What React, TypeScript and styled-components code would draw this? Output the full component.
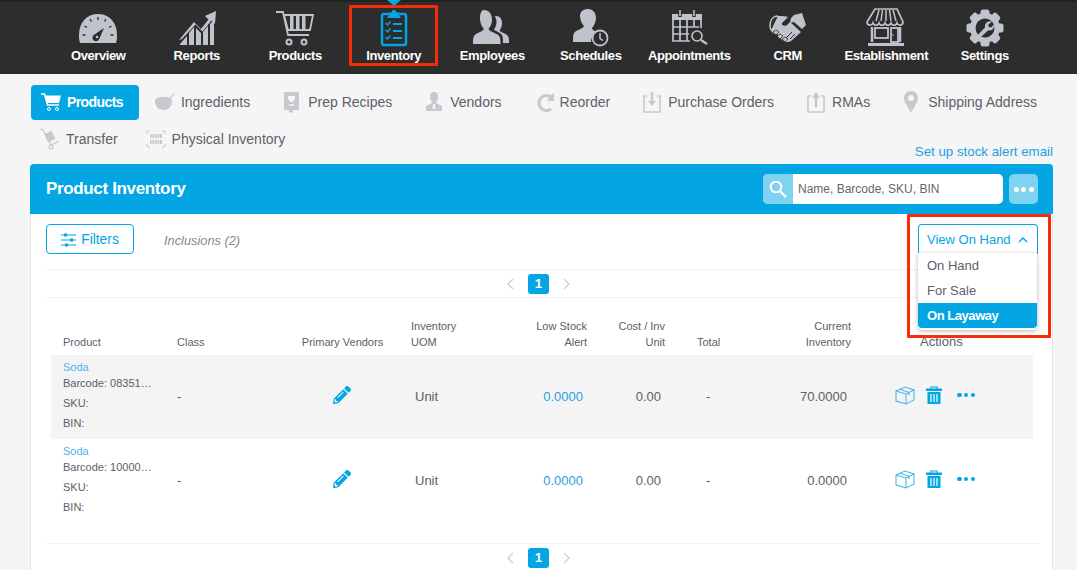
import React from "react";
import styled, { createGlobalStyle } from "styled-components";
import { FaPencilAlt } from "react-icons/fa";

const BLUE = "#03a5e3";
const GREY = "#bfc3cb";
const TAB = "#c6c9cf";

const Global = createGlobalStyle`
  html, body { margin: 0; padding: 0; height: 570px; overflow: hidden; background: #f5f5f5; }
  body { font-family: "Liberation Sans", Arial, sans-serif; color: #555; }
`;

const Page = styled.div`width: 1077px; height: 570px; overflow: hidden;`;
const Nav = styled.nav`
  height: 74px; box-sizing: border-box; background: #2d2d2d; border-top: 2px solid #222;
  display: flex; padding-left: 49px;
`;
const NavItem = styled.div`
  position: relative; width: 98.5px; display: flex; flex-direction: column; align-items: center;
  padding-top: 5px; box-sizing: border-box;
`;
const NavIcon = styled.svg`width: 40px; height: 40px; display: block;`;
const NavLabel = styled.span`
  margin-top: 1px; color: #fff; font-size: 13px; line-height: 16px; font-weight: 700; letter-spacing: -0.4px; white-space: nowrap;
`;
const Pointer = styled.div`
  position: absolute; top: -2px; left: 50%; margin-left: -7px; width: 0; height: 0;
  border-left: 7px solid transparent; border-right: 7px solid transparent; border-top: 6px solid ${BLUE};
`;
const NavHighlight = styled.div`
  position: absolute; left: 4.5px; top: 3px; width: 89px; height: 61px; box-sizing: border-box;
  border: 3px solid #f52d07; border-radius: 1px;
`;

const SubNav = styled.div`
  display: flex; flex-wrap: wrap; column-gap: 8px; row-gap: 2px; padding: 11px 18px 4px 31px;
  width: 1077px; box-sizing: border-box;
`;
const Tab = styled.div<{ $active?: boolean; $pull?: number }>`
  height: 35px; display: flex; align-items: center; gap: 7px; box-sizing: border-box;
  padding: ${p => (p.$active ? "0 16px 2px 10px" : "0 16px 2px 8px")};
  margin-left: ${p => p.$pull ?? 0}px;
  border-radius: 4px; font-size: 14px;
  font-weight: ${p => (p.$active ? 700 : 400)};
  letter-spacing: ${p => (p.$active ? "-0.6px" : "0")};
  background: ${p => (p.$active ? BLUE : "transparent")};
  color: ${p => (p.$active ? "#fff" : "#5d6068")};
  align-self: flex-start;
`;
const TabIcon = styled.svg`width: 20px; height: 24px; flex: none; display: block; margin-right: -1px;`;
const AlertLink = styled.a`
  margin-left: auto; margin-right: 6px; align-self: flex-end; font-size: 13.3px; line-height: 16px; color: #1d9fe3; margin-top: 22px;
`;

const Card = styled.section`
  margin-left: 30px; width: 1023px; background: #fff; border: solid #e6e6e6; border-width: 0 1px; box-sizing: border-box;
`;
const CardHeader = styled.header`
  height: 50px; margin: 0 -1px; background: ${BLUE}; border-radius: 4px 4px 0 0; display: flex; align-items: center;
  padding: 0 15px 0 16px;
`;
const Title = styled.h1`
  margin: 0; flex: 1; color: #fff; font-size: 17px; font-weight: 700; letter-spacing: -0.35px;
`;
const Search = styled.div`
  width: 240px; height: 30px; display: flex; border-radius: 5px; overflow: hidden; background: #fff;
`;
const SearchIcon = styled.div`
  width: 30px; background: #80d2f1; display: flex; align-items: center; justify-content: center;
`;
const SearchText = styled.div`
  padding-left: 5px; font-size: 12px; line-height: 30px; color: #666;
`;
const MoreBtn = styled.div`
  width: 29px; height: 30px; margin-left: 6px; background: #80d2f1; border-radius: 5px;
  display: flex; align-items: center; justify-content: center; gap: 2.5px;
`;
const WhiteDot = styled.i`width: 5px; height: 5px; border-radius: 50%; background: #fff;`;

const Body = styled.div`padding: 0 14px 0 15px;`;
const FilterRow = styled.div`
  height: 56px; display: flex; align-items: flex-start; padding-top: 10px; box-sizing: border-box;
  border-bottom: 1px solid #f0f0f0;
`;
const FilterBtn = styled.div`
  width: 88px; height: 30px; box-sizing: border-box; border: 1px solid ${BLUE}; border-radius: 4px; padding-top: 1px;
  display: flex; align-items: center; justify-content: center; gap: 5px; color: ${BLUE}; font-size: 13.8px;
`;
const Inclusions = styled.em`
  margin-left: 30px; line-height: 33px; font-size: 12.8px; color: #888;
`;
const DropAnchor = styled.div`position: relative; margin-left: auto; width: 120px; height: 30px;`;
const DropBtn = styled.div`
  height: 30px; box-sizing: border-box; border: 1px solid ${BLUE}; border-bottom: none; border-radius: 4px 4px 0 0;
  display: flex; align-items: center; padding-left: 8px; gap: 7px; color: ${BLUE}; font-size: 13px;
`;
const DropMenu = styled.ul`
  position: absolute; z-index: 3; left: 0; top: 29px; width: 119px; margin: 0; padding: 0 0 2px; list-style: none;
  background: #fff; border-radius: 0 0 4px 4px; box-shadow: 0 1px 4px rgba(0,0,0,.3);
`;
const DropItem = styled.li<{ $on?: boolean }>`
  height: 25px; line-height: 25px; padding-left: 9px; font-size: 13px;
  color: ${p => (p.$on ? "#fff" : "#5d6068")}; background: ${p => (p.$on ? BLUE : "#fff")};
  font-weight: ${p => (p.$on ? 700 : 400)}; letter-spacing: ${p => (p.$on ? "-0.45px" : "0")};
  &:last-child { border-radius: 0 0 4px 4px; }
`;
const DropHighlight = styled.div`
  position: absolute; z-index: 4; left: -11px; right: -13px; top: -10px; height: 124px; box-sizing: border-box;
  border: 3px solid #f52d07; border-radius: 1px; pointer-events: none;
`;

const Pager = styled.div<{ $line?: boolean }>`
  height: ${p => (p.$line ? 28 : 27)}px; display: flex; align-items: center; justify-content: center; gap: 14px; box-sizing: border-box;
  border-bottom: ${p => (p.$line ? "1px solid #f0f0f0" : "none")};
  padding-right: 7px;
`;
const PageNum = styled.div`
  width: 21px; height: 20px; background: ${BLUE}; color: #fff; font-size: 13.5px; font-weight: 700;
  border-radius: 3px; text-align: center; line-height: 20px;
`;

const COLS = "114px 125px 105px 64px 132px 78px 71px 115px 178px";
const HeadRow = styled.div`
  display: grid; grid-template-columns: ${COLS}; margin: 0 5px; height: 57px; box-sizing: border-box; padding-bottom: 5px; align-items: end;
`;
const HeadCell = styled.div<{ $align?: string; $pr?: number; $pl?: number; $size?: number }>`
  font-size: ${p => p.$size ?? 11}px; line-height: 16px; color: #5d6068;
  text-align: ${p => p.$align ?? "left"};
  padding-left: ${p => p.$pl ?? 0}px; padding-right: ${p => p.$pr ?? 0}px;
`;
const Row = styled.div<{ $alt?: boolean }>`
  display: grid; grid-template-columns: ${COLS}; margin: 0 5px; height: 84px; align-items: center;
  background: ${p => (p.$alt ? "#f4f4f4" : "#fff")};
`;
const ProductCell = styled.div`
  padding-left: 12px; font-size: 11px; line-height: 20px; color: #5d6068; align-self: start; padding-top: 4px;
`;
const ProductName = styled.div`color: #4ab5ea; line-height: 16px; margin-bottom: -2px;`;
const Clip = styled.div`white-space: nowrap;`;
const Cell = styled.div<{ $align?: string; $pr?: number; $pl?: number; $blue?: boolean }>`
  font-size: 13px; color: ${p => (p.$blue ? "#2a9fe0" : "#5d6068")};
  text-align: ${p => p.$align ?? "left"};
  padding-left: ${p => p.$pl ?? 0}px; padding-right: ${p => p.$pr ?? 0}px;
  position: relative; top: -1px;
`;
const PencilWrap = styled.div`display: flex; justify-content: center; color: ${BLUE}; position: relative; top: -2px; left: -1px;`;
const Actions = styled.div`display: flex; align-items: center; padding-left: 40px; position: relative; top: -2px;`;
const BlueDots = styled.div`display: flex; gap: 2.3px; margin-left: 15px;`;
const BlueDot = styled.i`width: 4.5px; height: 4.5px; border-radius: 50%; background: ${BLUE};`;
const FootLine = styled.div`height: 20px; border-bottom: 1px solid #f0f0f0;`;
const ActSvg = styled.svg`display: block;`;

const ic = { fill: GREY };
const D = "#2d2d2d";
const gearTeeth = [0, 45, 90, 135, 180, 225, 270, 315];

const navIcons: Record<string, React.ReactNode> = {
  Overview: <g>
    <path d="M2 36c-1-3-1-6-1-8C1 15 9 7 20 7s19 8 19 21c0 2 0 5-1 8z" {...ic} />
    <path d="M20 10v3M12 12l1.500 2.500M28 12l-1.500 2.500M6.500 19l2.500 1.500M33.500 19l-2.500 1.500M4.500 28h3M32.500 28h3" stroke={D} strokeWidth="1.300" />
    <path d="M26 21l-9.500 6.500a3.500 3.500 0 1 0 4.700 4.500z" fill={D} />
    <circle cx="19" cy="30" r="1.300" fill={GREY} />
  </g>,
  Reports: <g fill={GREY}>
    <path d="M39 4l-1 13-3.500-3.500-9 11-7-7L5 32l-3 1 15-18 7 7 7.500-9.500L28 9z" />
    <path d="M3 38v-1l7-8v9zM12 38V26l5-6v18zM19 38V21l5 5v12zM26 38V25l5-6v19zM33 38V17l4-4v25z" />
  </g>,
  Products: <g>
    <path d="M1 5h7l5 23h21" fill="none" stroke={GREY} strokeWidth="1.800" />
    <path d="M9 8h29l-3 15H13z" fill="none" stroke={GREY} strokeWidth="1.800" />
    <path d="M15 9v13h3.500V9zM21 9v13h3.500V9zM27 9v13h3.500V9z" fill={GREY} />
    <circle cx="14" cy="35" r="2.500" fill="none" stroke={GREY} strokeWidth="2" />
    <circle cx="29" cy="35" r="2.500" fill="none" stroke={GREY} strokeWidth="2" />
  </g>,
  Inventory: <g>
    <rect x="8" y="7" width="24" height="31" rx="2" fill="none" stroke={BLUE} strokeWidth="2.500" />
    <path d="M15 8V5.500h2.500a2.500 2.500 0 0 1 5 0H25V8l2 3H13z" fill={BLUE} />
    <path d="M11.500 16l2 2 3-3.500M11.500 23l2 2 3-3.500M11.500 30l2 2 3-3.500" fill="none" stroke={BLUE} strokeWidth="1.400" />
    <path d="M19 17h9M19 24h9M19 31h9" stroke={BLUE} strokeWidth="2" />
  </g>,
  Employees: <g fill={GREY}>
    <path d="M12 3c5 0 8 4 8 10 0 4-2 7-3.500 9 1 3 9 4 11 7.500 1 1.500 1 5 1 7.500H1c0-3 0-6 1-8 2-3 8-4 10-7-2-2-4-6-4-10 0-5 1-9 4-9z" />
    <path d="M24 9c4 0 6 3 6 7 0 3-1 6-2.500 7.500 1 2 7 3 8.500 5.500 1 1.500 1 4 1 7h-6c0-3 0-6-1-8-1.500-2.500-5-3.500-8-5 1-2 2.500-5 2.500-8 0-2-.5-4-1.500-5 .5-1 1-1.500 1-1.500z" />
  </g>,
  Schedules: <g>
    <path d="M17 2c5 0 8 4 8 9 0 4-2 8-4 10 0 2 3 3 5 4-4 2-6 6-6 10H2c0-4 0-7 1-9 2-3 9-4 10-7-2-2-4-6-4-10 0-4 3-7 8-7z" fill={GREY} />
    <circle cx="29" cy="31" r="7.500" fill="none" stroke={GREY} strokeWidth="1.800" />
    <path d="M29 26v5.500l3 2" fill="none" stroke={GREY} strokeWidth="1.500" />
  </g>,
  Appointments: <g>
    <path d="M3 7h30v6H3z" fill={GREY} />
    <path d="M11 3v7M25 3v7" stroke={D} strokeWidth="3.500" />
    <path d="M11 3v6M25 3v6" stroke={GREY} strokeWidth="1.500" />
    <path d="M4 13v21h17M32 13v8M4 20h26M4 27h16M11 13v21M18 13v21M25 13v7" fill="none" stroke={GREY} strokeWidth="1.700" />
    <circle cx="28" cy="29" r="5" fill={D} stroke={GREY} strokeWidth="1.600" />
    <path d="M32 33l6 4" stroke={GREY} strokeWidth="2.200" />
  </g>,
  CRM: <g>
    <path d="M10 9C5 9 2 13 2 19c0 2 1 4 2 5" fill="none" stroke={GREY} strokeWidth="1.500" />
    <path d="M10 9c4 0 8 0 10 1l-6 6c-1 2 2 4 5 2l3-3 11 10-10 9c-3 2-6 1-9-1l-2-2c-1-4-4-5-6-4l-3-3 3-7z" fill={GREY} />
    <path d="M26 8l8-2 4 12-4 4-8-7-4 1 1-5z" fill={GREY} />
    <path d="M5 25l3-2 3 2-3 3zM9 29l3-2 3 2-3 3zM14 32l3-2 3 2-3 3z" fill={GREY} stroke={D} strokeWidth=".8" />
    <path d="M24 25l-6 6M27 27l-5 5" stroke={D} strokeWidth="1" />
  </g>,
  Establishment: <g>
    <path d="M9 2h22l6 13c0 4-5 4-6 1-1 3-5 3-6 0-1 3-5 3-6 0-1 3-5 3-6 0-1 3-5 3-6 0-1 3-6 3-6-1z" fill="none" stroke={GREY} strokeWidth="1.700" />
    <path d="M13 3l-3 11M20 3v11M27 3l3 11M16.500 3L15 14M23.500 3L25 14" stroke={GREY} strokeWidth="1.500" />
    <path d="M6 20v15M34 20v15" stroke={GREY} strokeWidth="2.500" />
    <path d="M2 36h36v3H2z" fill={GREY} />
    <rect x="9" y="21" width="13" height="10" fill="none" stroke={GREY} strokeWidth="1.800" />
    <rect x="25" y="21" width="7" height="14" fill="none" stroke={GREY} strokeWidth="1.800" />
    <circle cx="27" cy="28" r=".8" fill={GREY} />
  </g>,
  Settings: <g>
    <circle cx="20" cy="21" r="15" fill={GREY} />
    {gearTeeth.map(a => (
      <rect key={a} x="15.500" y="2.500" width="9" height="8" rx="2.500" fill={GREY} transform={`rotate(${a} 20 21)`} />
    ))}
    <circle cx="20" cy="21" r="9.500" fill={D} />
    <path d="M27 14.500l-3.800 3.300.5 2.300 2.300.5 3.200-3.200c.6 3.700-2.400 6.700-6 5.900l-7.500 7c-1.400 1-3.700-1-2.600-2.600l7-7.500c-.9-3.700 2.900-7 6.900-5.700z" fill={GREY} />
  </g>,
};
const navNames = ["Overview", "Reports", "Products", "Inventory", "Employees", "Schedules", "Appointments", "CRM", "Establishment", "Settings"];

const Cart = () => (
  <TabIcon viewBox="0 0 20 24">
    <path d="M0 4h3.500l3 11H18" fill="none" stroke="#fff" strokeWidth="1.600" />
    <path d="M4.500 5.500H20l-2 7.500H6.500z" fill="#fff" />
    <circle cx="8" cy="19" r="1.500" fill="none" stroke="#fff" /><circle cx="16" cy="19" r="1.500" fill="none" stroke="#fff" />
  </TabIcon>
);
const tabDraw: Record<string, React.ReactNode> = {
  Ingredients: <g fill={TAB}><path d="M0 11h17c0 5-3 9-8.500 9S0 16 0 11z" /><ellipse cx="8.500" cy="10.500" rx="8.500" ry="3.800" /><path d="M12 10l7-7 .8.8-6 7z" /></g>,
  "Prep Recipes": <g><rect x="2" y="2" width="15" height="18" rx="1" fill={TAB} /><path d="M6 6h7v3l-2 2v1H8v-1L6 9z" fill="#f5f5f5" /><path d="M7 15h5" stroke="#f5f5f5" strokeWidth="1.500" /><rect x="7" y="20" width="4" height="2.500" fill={TAB} /></g>,
  Vendors: <g fill={TAB}><path d="M10 2c3 0 4 2 4 5 0 2-1 4-2 5v1l6 3v5H2v-5l6-3v-1C7 11 6 9 6 7c0-3 1-5 4-5z" /><path d="M9 14h2l.5 5h-3z" fill="#f5f5f5" /></g>,
  Reorder: <g><path d="M16 8a7.500 7.500 0 1 0 -1 11" fill="none" stroke={TAB} strokeWidth="3" transform="translate(2 0)" /><path d="M20 3v8h-7l3-5z" fill={TAB} /></g>,
  "Purchase Orders": <g fill="none" stroke={TAB} strokeWidth="1.600"><path d="M5 6H2v16h16V6h-3" /><path d="M10 2v12" strokeWidth="2.600" /><path d="M6 11h8l-4 5z" fill={TAB} stroke="none" /></g>,
  RMAs: <g fill="none" stroke={TAB} strokeWidth="1.600"><path d="M5 6H2v16h16V6h-3" /><path d="M10 6v11" strokeWidth="2.600" /><path d="M6 8h8l-4-6z" fill={TAB} stroke="none" /></g>,
  "Shipping Address": <g><path d="M9 1c4 0 7 3 7 7s-4 9-7 15C6 17 2 12 2 8s3-7 7-7z" fill={TAB} /><circle cx="9" cy="8" r="3" fill="#f5f5f5" /></g>,
  Transfer: <g fill="none" stroke={TAB} strokeWidth="1.200"><path d="M0 2l3 1 8 15" /><rect x="6" y="5" width="8" height="9" transform="rotate(-25 10 10)" fill={TAB} stroke="none" /><path d="M10 19l9-5" /><circle cx="11" cy="20" r="2" /></g>,
  "Physical Inventory": <g fill="none" stroke={TAB}><path d="M1 7V4h3M16 4h3v3M1 17v3h3M16 20h3v-3" /><path d="M4 7h12v4H4zM4 13h12v4H4z" stroke="none" fill={TAB} /><path d="M6 7v10M8.500 7v10M11 7v10M13.500 7v10" stroke="#f5f5f5" strokeWidth=".8" /></g>,
};
const tabRow = ["Ingredients", "Prep Recipes", "Vendors", "Reorder", "Purchase Orders", "RMAs", "Shipping Address", "Transfer", "Physical Inventory"];
const tabPull: Record<string, number> = { Transfer: 1, "Physical Inventory": -4 };

const Chevron = ({ dir, color = "#cdd0d4" }: { dir: "l" | "r" | "u"; color?: string }) => (
  <svg width={dir === "u" ? 10 : 7} height={dir === "u" ? 6 : 12} viewBox={dir === "u" ? "0 0 10 6" : "0 0 7 12"} style={{ display: "block" }}>
    <path d={dir === "l" ? "M6 1L1 6l5 5" : dir === "r" ? "M1 1l5 5-5 5" : "M1 5l4-4 4 4"} fill="none" stroke={color} strokeWidth="1.400" />
  </svg>
);
const Sliders = () => (
  <svg width="15" height="14" viewBox="0 0 15 14" style={{ display: "block" }}>
    <path d="M0 2h15M0 7h15M0 12h15" stroke={BLUE} strokeWidth="1.100" />
    <rect x="3" y=".5" width="3" height="3" fill={BLUE} /><rect x="9" y="5.500" width="3" height="3" fill={BLUE} /><rect x="4" y="10.500" width="3" height="3" fill={BLUE} />
  </svg>
);
const Box = () => (
  <ActSvg width="20" height="19" viewBox="0 0 20 19">
    <path d="M1 5l9-4 9 3v10l-8 4-10-3z" fill="none" stroke="#4ab5ea" strokeWidth="1.100" />
    <path d="M1 5l10 3 8-4M11 8v10M5 3.300l9 3v3" fill="none" stroke="#4ab5ea" strokeWidth="1.100" />
  </ActSvg>
);
const Trash = () => (
  <ActSvg width="16" height="18" viewBox="0 0 16 18" style={{ marginLeft: 11 }}>
    <path d="M5 3V1h6v2" fill="none" stroke={BLUE} strokeWidth="1.200" />
    <path d="M0 2.500h16V5H0z" fill={BLUE} />
    <path d="M1.500 6h13v12h-13z" fill={BLUE} />
    <path d="M5 8v8M8 8v8M11 8v8" stroke="#fff" strokeWidth="1.200" />
  </ActSvg>
);

const products = [
  { code: "Barcode: 08351…", cur: "70.0000", alt: true },
  { code: "Barcode: 10000…", cur: "0.0000", alt: false },
];

const PagerContent = () => (
  <>
    <Chevron dir="l" /><PageNum>1</PageNum><Chevron dir="r" />
  </>
);

export default function App() {
  return (
    <Page>
      <Global />
      <Nav>
        {navNames.map(n => (
          <NavItem key={n}>
            {n === "Inventory" && <Pointer />}
            {n === "Inventory" && <NavHighlight />}
            <NavIcon viewBox="0 0 40 40">{navIcons[n]}</NavIcon>
            <NavLabel>{n}</NavLabel>
          </NavItem>
        ))}
      </Nav>
      <SubNav>
        <Tab $active><Cart />Products</Tab>
        {tabRow.map(t => (
          <Tab key={t} $pull={tabPull[t] ?? 0}>
            <TabIcon viewBox="0 0 20 24">{tabDraw[t]}</TabIcon>{t}
          </Tab>
        ))}
        <AlertLink>Set up stock alert email</AlertLink>
      </SubNav>
      <Card>
        <CardHeader>
          <Title>Product Inventory</Title>
          <Search>
            <SearchIcon>
              <svg width="18" height="18" viewBox="0 0 18 18"><circle cx="7" cy="7" r="5.300" fill="none" stroke="#fff" strokeWidth="2" /><path d="M11 11l6 6" stroke="#fff" strokeWidth="2.400" /></svg>
            </SearchIcon>
            <SearchText>Name, Barcode, SKU, BIN</SearchText>
          </Search>
          <MoreBtn><WhiteDot /><WhiteDot /><WhiteDot /></MoreBtn>
        </CardHeader>
        <Body>
          <FilterRow>
            <FilterBtn><Sliders />Filters</FilterBtn>
            <Inclusions>Inclusions (2)</Inclusions>
            <DropAnchor>
              <DropBtn>View On Hand <Chevron dir="u" color={BLUE} /></DropBtn>
              <DropMenu>
                <DropItem>On Hand</DropItem>
                <DropItem>For Sale</DropItem>
                <DropItem $on>On Layaway</DropItem>
              </DropMenu>
              <DropHighlight />
            </DropAnchor>
          </FilterRow>
          <Pager $line><PagerContent /></Pager>
          <HeadRow>
            <HeadCell $pl={12}>Product</HeadCell>
            <HeadCell $pl={12}>Class</HeadCell>
            <HeadCell $align="center">Primary Vendors</HeadCell>
            <HeadCell $pl={16}>Inventory<br />UOM</HeadCell>
            <HeadCell $align="right" $pr={4}>Low Stock<br />Alert</HeadCell>
            <HeadCell $align="right" $pr={4}>Cost / Inv<br />Unit</HeadCell>
            <HeadCell $pl={28}>Total</HeadCell>
            <HeadCell $align="right" $pr={4}>Current<br />Inventory</HeadCell>
            <HeadCell $pl={65} $size={13}>Actions</HeadCell>
          </HeadRow>
          {products.map(p => (
            <Row key={p.code} $alt={p.alt}>
              <ProductCell>
                <ProductName>Soda</ProductName>
                <Clip>{p.code}</Clip>
                <div>SKU:</div>
                <div>BIN:</div>
              </ProductCell>
              <Cell $pl={12}>-</Cell>
              <PencilWrap><FaPencilAlt size={18} /></PencilWrap>
              <Cell $pl={20}>Unit</Cell>
              <Cell $align="right" $pr={8} $blue>0.0000</Cell>
              <Cell $align="right" $pr={8}>0.00</Cell>
              <Cell $pl={37}>-</Cell>
              <Cell $align="right" $pr={8}>{p.cur}</Cell>
              <Actions><Box /><Trash /><BlueDots><BlueDot /><BlueDot /><BlueDot /></BlueDots></Actions>
            </Row>
          ))}
          <FootLine />
          <Pager><PagerContent /></Pager>
        </Body>
      </Card>
    </Page>
  );
}
